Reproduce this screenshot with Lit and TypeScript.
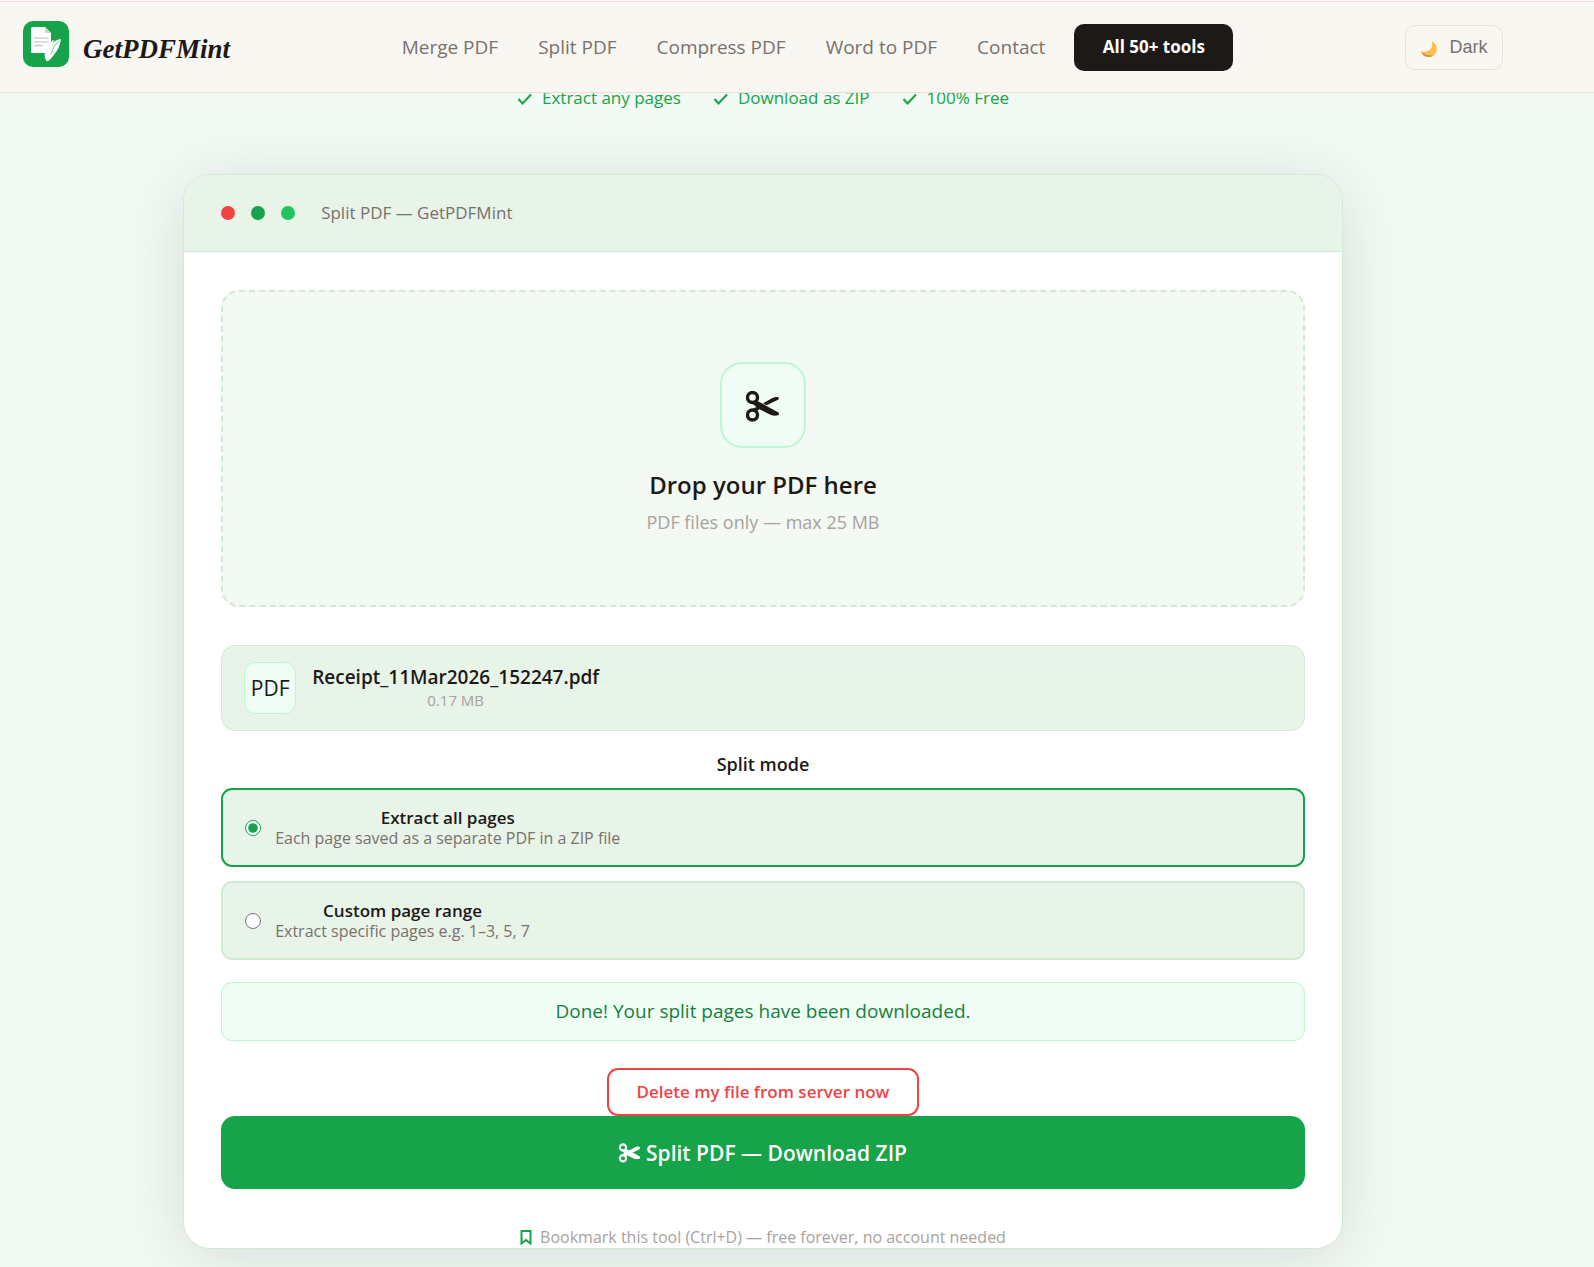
import { LitElement, html, css, svg } from "lit";
import { customElement, state } from "lit/decorators.js";

const NAV = ["Merge PDF", "Split PDF", "Compress PDF", "Word to PDF", "Contact"];
const TRUST = ["Extract any pages", "Download as ZIP", "100% Free"];
const MODES = [
  { id: "all", title: "Extract all pages", hint: "Each page saved as a separate PDF in a ZIP file" },
  { id: "range", title: "Custom page range", hint: "Extract specific pages e.g. 1–3, 5, 7" },
];

const scissors = svg`
  <circle cx="6.5" cy="6.5" r="5" fill="none" stroke="currentColor" stroke-width="3.4" />
  <circle cx="6.5" cy="24" r="5" fill="none" stroke="currentColor" stroke-width="3.4" />
  <path fill="currentColor" d="M5 11.5 L10.5 9.5 L32.5 21.5 Q33.5 22.3 32.6 24 Q29 25.4 25 24 L13.6 18.3 Q11.5 19.2 9.5 21 L5 19.2 Q8.500 16.300 10.500 16 Z" />
  <path fill="currentColor" d="M17 12.300 L26.500 7 Q29.500 5.600 32.600 6.200 Q33.500 7.800 32 8.800 L20.500 14.200 Z" />
`;

@customElement("app-root")
export class AppRoot extends LitElement {
  @state() private mode = "all";

  static styles = css`
    :host {
      display: block;
      min-height: 100vh;
      overflow: hidden;
      box-sizing: border-box;
      background: #f3f9f3;
      color: #1c1917;
      font-family: "Open Sans", "Noto Sans", sans-serif;
      font-size: 18px;
      line-height: 24px;
    }
    * {
      box-sizing: border-box;
    }
    button {
      font: inherit;
      cursor: pointer;
    }
    .bar {
      position: fixed;
      inset: 0 0 auto 0;
      z-index: 2;
      height: 93px;
      padding: 2px 91px 0 23px;
      display: flex;
      align-items: center;
      justify-content: space-between;
      background: #f9f7f2;
      border-bottom: 1px solid #eeddd3;
      box-shadow: inset 0 1px #fbf8f6, inset 0 2px #f3dde3;
    }
    .brand {
      display: flex;
      align-items: flex-start;
      gap: 14px;
      padding-bottom: 6px;
      color: inherit;
      text-decoration: none;
      font: italic 700 27px/36px "Liberation Serif", serif;
    }
    .brand span {
      padding-top: 10px;
    }
    .brand svg {
      width: 46px;
      height: 46px;
    }
    .links {
      display: flex;
      align-items: center;
      gap: 40px;
      font-size: 19px;
    }
    .links a {
      color: #78716c;
      text-decoration: none;
    }
    .links .all {
      margin-left: -11px;
      width: 159px;
      height: 47px;
      border-radius: 10px;
      display: grid;
      place-items: center;
      background: #1c1917;
      color: #fff;
      font-weight: 700;
      font-size: 17px;
    }
    .theme {
      width: 98px;
      height: 45px;
      padding: 0;
      display: flex;
      align-items: center;
      justify-content: center;
      gap: 11px;
      border: 1px solid #eae1d6;
      border-radius: 10px;
      background: transparent;
      color: #78716c;
      font-family: "Liberation Sans", Arial, sans-serif;
      font-size: 18px;
    }
    .theme svg {
      width: 18px;
      height: 18px;
      margin-top: 4px;
    }
    .page {
      padding: 86px 68px 18px 0;
    }
    .trust {
      display: flex;
      justify-content: center;
      gap: 32px;
      margin: 0;
      padding: 0;
      list-style: none;
      color: #16a34a;
      font-size: 17px;
    }
    .trust li {
      display: flex;
      align-items: center;
      gap: 10px;
    }
    .trust svg {
      width: 15px;
      height: 15px;
    }
    .card {
      width: 76%;
      margin: 64px auto 0;
      border: 1px solid #d1ead2;
      border-radius: 27px;
      overflow: hidden;
      background: #fff;
      text-align: center;
      box-shadow: 0 9px 68px rgba(20, 24, 32, 0.12);
    }
    .title {
      height: 77px;
      padding: 0 37px;
      display: flex;
      align-items: center;
      gap: 16px;
      background: #e8f4e8;
      border-bottom: 1px solid #d1ead2;
      color: #78716c;
      font-size: 17px;
    }
    .dot {
      width: 14px;
      height: 14px;
      border-radius: 50%;
    }
    .red {
      background: #ef4444;
    }
    .green {
      background: #16a34a;
    }
    .lime {
      background: #22c55e;
    }
    .title span:last-child {
      margin-left: 10px;
    }
    .body {
      padding: 38px 37px 0;
      display: flex;
      flex-direction: column;
    }
    .drop {
      height: 317px;
      padding-top: 3px;
      border: 2px dashed #d1ead2;
      border-radius: 18px;
      background: #f3f9f3;
      display: flex;
      flex-direction: column;
      align-items: center;
      justify-content: center;
    }
    .tile {
      width: 86px;
      height: 86px;
      display: grid;
      place-items: center;
      border: 2px solid #bbf7d0;
      border-radius: 22px;
      background: #f0fdf4;
    }
    .tile svg {
      width: 34px;
      height: 31px;
      margin-top: 2px;
    }
    .drop h1 {
      margin: 21px 0 5px;
      font-size: 24px;
      line-height: 32px;
      font-weight: 600;
    }
    .drop p {
      margin: 0;
      line-height: 32px;
      color: #a8a29e;
    }
    .file {
      height: 86px;
      margin-top: 38px;
      padding: 0 22px;
      display: flex;
      align-items: center;
      gap: 16px;
      border: 1px solid #d1ead2;
      border-radius: 14px;
      background: #e8f4e8;
    }
    .badge {
      width: 52px;
      height: 52px;
      display: grid;
      place-items: center;
      border: 1px solid #bbf7d0;
      border-radius: 11px;
      background: #f0fdf4;
      font-size: 21px;
    }
    .name {
      font-size: 19px;
      font-weight: 600;
    }
    .size {
      font-size: 15px;
      line-height: 22px;
      color: #a8a29e;
    }
    .hint {
      font-size: 16px;
      color: #78716c;
    }
    fieldset {
      min-width: 0;
      margin: 0;
      padding: 0;
      border: 0;
    }
    legend {
      width: 100%;
      padding: 21px 0 12px;
      font-weight: 600;
    }
    .mode {
      height: 79px;
      margin-bottom: 14px;
      padding: 0 22px;
      display: flex;
      align-items: center;
      gap: 14px;
      border: 2px solid #d1ead2;
      border-radius: 11px;
      background: #e8f4e8;
    }
    .mode.on {
      border-color: #16a34a;
    }
    .mode input {
      width: 16px;
      height: 16px;
      margin: 0;
      accent-color: #16a34a;
    }
    .mode b,
    .mode .hint {
      display: block;
      line-height: 21px;
    }
    .mode b {
      font-size: 17px;
      font-weight: 600;
    }
    .done {
      height: 59px;
      margin-top: 8px;
      padding-bottom: 2px;
      display: grid;
      place-items: center;
      border: 1px solid #bbf7d0;
      border-radius: 11px;
      background: #f0fdf4;
      color: #15803d;
      font-size: 19px;
    }
    .delete {
      align-self: center;
      height: 48px;
      margin-top: 27px;
      padding: 0 28px;
      border: 2px solid #ef4444;
      border-radius: 11px;
      background: #fff;
      color: #ef4444;
      font-size: 17px;
      font-weight: 600;
    }
    .go {
      height: 73px;
      border: 0;
      border-radius: 14px;
      background: #16a34a;
      color: #fff;
      font-size: 21px;
      font-weight: 600;
      display: flex;
      align-items: center;
      justify-content: center;
      gap: 6px;
    }
    .go svg {
      width: 21px;
      height: 20px;
      stroke: currentColor;
      stroke-width: 2;
    }
    .note {
      margin: 37px 0 0;
      height: 22px;
      display: flex;
      align-items: center;
      justify-content: center;
      gap: 8px;
      color: #a8a29e;
      font-size: 16px;
      line-height: 22px;
    }
    .note svg {
      width: 12px;
      height: 15px;
    }
  `;

  render() {
    return html`
      <header class="bar">
        <a class="brand" href="#">
          <svg viewBox="0 0 46 46" aria-hidden="true">
            <rect width="46" height="46" rx="10" fill="#16a34a" />
            <path d="M9.500 6H22l6 6v20H9.500A1.500 1.500 0 0 1 8 30.500v-23A1.500 1.500 0 0 1 9.500 6z" fill="#fff" />
            <path d="M22 6l6 6h-6z" fill="#bbdfc5" />
            <path d="M11 17.200h14.500M11 20.900h14.500M11 24.500h9" stroke="#c9c9c9" stroke-width="1.300" />
            <path d="M22 31L28 21Q29 19 31.500 19L29 22.500Q33 18.500 38 18Q37 27 30 35Q26 41 23.500 40Q21 37 22 31z" fill="#fff" />
            <path d="M28 33Q30.500 25 35.500 20" stroke="#16a34a" stroke-width="0.600" fill="none" />
          </svg>
          <span>GetPDFMint</span>
        </a>
        <nav class="links">
          ${NAV.map((n) => html`<a href="#">${n}</a>`)}
          <a class="all" href="#">All 50+ tools</a>
        </nav>
        <button class="theme">
          <svg viewBox="0 0 18 18" aria-hidden="true">
            <path d="M12 1Q18 5 16.500 11Q14 17.500 8 17Q3 16.500 1 11.500Q7 13 10.500 9Q13 6 12 1z" fill="#fbbf4c" />
            <path d="M1 11.500Q3 16.500 8 17Q11 17 13 15.500Q6 16 1 11.500z" fill="#dd8a4a" />
          </svg>
          Dark
        </button>
      </header>
      <main class="page">
        <ul class="trust">
          ${TRUST.map(
            (t) => html`<li>
              <svg viewBox="0 0 15 15" fill="none" stroke="currentColor" stroke-width="2" aria-hidden="true">
                <path d="M1.500 8l4 4.500L14 3.500" />
              </svg>
              ${t}
            </li>`
          )}
        </ul>
        <section class="card">
          <div class="title">
            <span class="dot red"></span><span class="dot green"></span><span class="dot lime"></span>
            <span>Split PDF — GetPDFMint</span>
          </div>
          <div class="body">
            <div class="drop">
              <div class="tile"><svg viewBox="0 0 34 31" aria-hidden="true">${scissors}</svg></div>
              <h1>Drop your PDF here</h1>
              <p>PDF files only — max 25 MB</p>
            </div>
            <div class="file">
              <div class="badge">PDF</div>
              <div>
                <div class="name">Receipt_11Mar2026_152247.pdf</div>
                <div class="size">0.17 MB</div>
              </div>
            </div>
            <fieldset>
              <legend>Split mode</legend>
              ${MODES.map(
                (m) => html`<label class="mode ${this.mode === m.id ? "on" : ""}">
                  <input
                    type="radio"
                    name="mode"
                    .checked=${this.mode === m.id}
                    @change=${() => (this.mode = m.id)}
                  />
                  <span><b>${m.title}</b><span class="hint">${m.hint}</span></span>
                </label>`
              )}
            </fieldset>
            <div class="done" role="status">Done! Your split pages have been downloaded.</div>
            <button class="delete">Delete my file from server now</button>
            <button class="go">
              <svg viewBox="0 0 34 31" aria-hidden="true">${scissors}</svg>
              Split PDF — Download ZIP
            </button>
            <p class="note">
              <svg viewBox="0 0 12 15" fill="none" stroke="#16a34a" stroke-width="2" aria-hidden="true">
                <path d="M1.500 1h9v12.500L6 10l-4.500 3.500z" />
              </svg>
              Bookmark this tool (Ctrl+D) — free forever, no account needed
            </p>
          </div>
        </section>
      </main>
    `;
  }
}
